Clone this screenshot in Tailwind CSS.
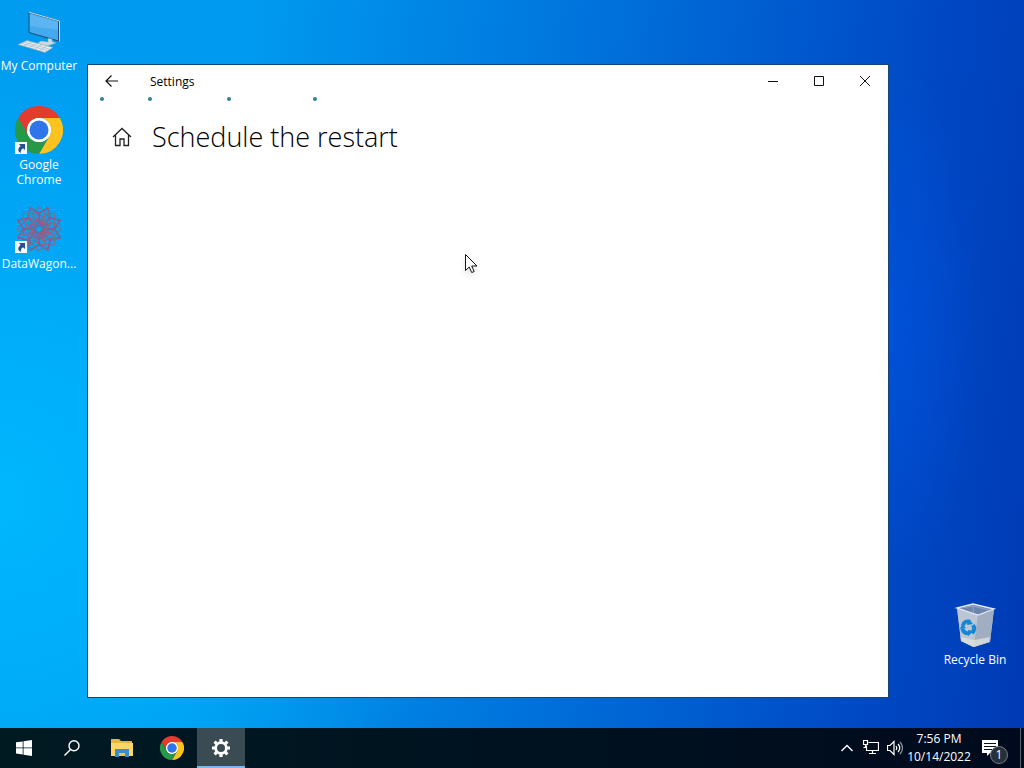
<!DOCTYPE html>
<html lang="en">
<head>
  <meta charset="UTF-8">
  <meta name="viewport" content="width=device-width, initial-scale=1.0">
  <title>Settings</title>
  <script src="https://cdn.jsdelivr.net/npm/@tailwindcss/browser@4"></script>
  <style>
    body {
      font-family: "Open Sans", "Noto Sans", sans-serif;
    }

    /* Wallpaper */
    .wallpaper {
      background:
        radial-gradient(ellipse 9% 34% at 87% 42%, rgba(0, 84, 224, 0.7), transparent),
        radial-gradient(ellipse 45% 60% at 0% 65%, rgba(0, 186, 255, 0.9), transparent),
        linear-gradient(96deg, #009cf0 0%, #009bf0 22%, #0078de 50%, #0057cd 74%, #0046c2 87%, #003ab4 100%);
    }
  </style>
</head>
<body class="wallpaper flex flex-col min-h-screen text-xs text-white overflow-hidden">
  <!-- Shared icons -->
  <svg class="hidden">
    <symbol id="chrome" viewBox="0 0 48 48">
      <circle cx="24" cy="24" r="12" fill="#fff"/>
      <path d="M24 12h20.8A24 24 0 0 0 3.2 12l10.4 18A12 12 0 0 1 24 12z" fill="#e33b2e"/>
      <path d="M34.4 30 24 48a24 24 0 0 0 20.8-36H24a12 12 0 0 1 10.4 18z" fill="#fcc31e"/>
      <path d="M13.6 30 3.2 12A24 24 0 0 0 24 48l10.4-18a12 12 0 0 1-20.8 0z" fill="#279847"/>
      <circle cx="24" cy="24" r="12" fill="#fff"/>
      <circle cx="24" cy="24" r="9.5" fill="#2f74e8"/>
    </symbol>
    <symbol id="shortcut" viewBox="0 0 12 12">
      <path d="M0 0h12v12H0z" fill="#f4f7fb"/>
      <path d="M4 2h6v6L8 6.300C6 7.500 5.500 9 6 11 2.500 9.500 2.500 6.500 5.600 4z" fill="#24508f"/>
    </symbol>
  </svg>

  <!-- Desktop -->
  <main class="relative flex flex-1 justify-between">
    <nav class="grid auto-rows-[99px] content-start w-[78px] pt-[7px] text-center leading-[15px]">
      <a href="#computer" class="flex flex-col items-center gap-[3px]">
        <svg class="size-12" viewBox="0 0 48 48">
          <path d="M15 5 45 13.500V35L15 26z" fill="#2878ae"/>
          <path d="M14 5.500 43.500 14v20L14 25.500z" fill="#45a9ee" stroke="#174d76"/>
          <path d="M15 7 43 15v8L15 19z" fill="#72c1f5" opacity=".5"/>
          <path d="M14 5.200 44.500 14v20.500" fill="none" stroke="#c9d9e0"/>
          <path d="M33 31.500v3.500l-7-1-4 2.500 9 3 10-3.500-4-1.500V32z" fill="#cbd9e1" stroke="#8aa7b8" stroke-width=".5"/>
          <path d="M12 33.500 38 40.500 30 45.500 3 37.500z" fill="#e7edf0" stroke="#8aa5b5" stroke-width=".7"/>
          <path d="m9 35 25 7M6 36.200l26 7.300M17 35l-8 4M22 36.300l-8 4.500M27 37.600l-8 5M32 39l-8 5" stroke="#9eb3be" stroke-width=".6"/>
        </svg>
        My Computer
      </a>
      <a href="#chrome-app" class="flex flex-col items-center gap-[3px]">
        <span class="relative">
          <svg class="size-12"><use href="#chrome"/></svg>
          <svg class="absolute bottom-0 left-0 size-3"><use href="#shortcut"/></svg>
        </span>
        <span>Google<br>Chrome</span>
      </a>
      <a href="#datawagon" class="flex flex-col items-center gap-[3px]">
        <span class="relative">
          <svg class="size-12" viewBox="-24 -24 48 48" fill="none" stroke="#7c6294" stroke-width="1.300">
            <g id="rosette"></g>
          </svg>
          <svg class="absolute bottom-0 left-0 size-3"><use href="#shortcut"/></svg>
        </span>
        DataWagon...
      </a>
    </nav>

    <a href="#recycle" class="flex flex-col items-center self-end gap-[3px] w-[98px] pb-[61px] leading-[15px]">
      <svg class="size-12" viewBox="0 0 48 48">
        <path d="M6 7 22 3l21 5-4 33-17 5-12-6z" fill="#aab7c9"/>
        <path d="M6 7 27 14l-4 32-13-6z" fill="#bcc5d4"/>
        <path d="m27 14 16-6-4 33-16 5z" fill="#a1aec2"/>
        <path d="m10 36 13 3 16-3-1 5-15 5-13-6z" fill="#dededc" opacity=".8"/>
        <path d="M6 7 22 3l21 5-16 6z" fill="#6d84ac" stroke="#e0e9f3" stroke-width="1.300"/>
        <path d="m22 4 .5 8M10 7l12-2 16 4" stroke="#93a6c4" fill="none"/>
        <g fill="none" stroke="#1287d6" stroke-width="4">
          <path d="M12 24.500c1-4 4-5 7-3"/>
          <path d="M22 24c2 3 1 6-1 8"/>
          <path d="M18 32.500c-4 0-6-2-6.500-5"/>
        </g>
        <path d="m18 18 4 5-6 1zM23 30l-6 5v-6zM9 28l2-5 4 4z" fill="#1287d6"/>
      </svg>
      Recycle Bin
    </a>

    <!-- Settings window -->
    <section class="absolute top-16 bottom-[30px] left-[87px] right-[135px] bg-white border border-[#14466f] text-black">
      <header class="flex items-center h-8">
        <button class="flex items-center justify-center w-12 h-8" aria-label="Back">
          <svg class="size-4" viewBox="0 0 16 16" fill="none" stroke="#111" stroke-width="1.200"><path d="M14 8H2.500M7.500 2.500 2 8l5.500 5.500"/></svg>
        </button>
        <h1 class="flex-1 pt-0.5 pl-3.5">Settings</h1>
        <button class="flex items-center justify-center w-[46px] h-8" aria-label="Minimize">
          <svg class="size-3" viewBox="0 0 12 12" stroke="#111"><path d="M1 6.500h10"/></svg>
        </button>
        <button class="flex items-center justify-center w-[46px] h-8" aria-label="Maximize">
          <svg class="size-3" viewBox="0 0 12 12" fill="none" stroke="#111"><path d="M1.500 1.500h9v9h-9z"/></svg>
        </button>
        <button class="flex items-center justify-center w-[46px] h-8" aria-label="Close">
          <svg class="size-3" viewBox="0 0 12 12" stroke="#111"><path d="m1 1 10 10M11 1 1 11"/></svg>
        </button>
      </header>

      <!-- Progress dots -->
      <svg class="w-full h-1" fill="#338197" role="progressbar" aria-label="Loading">
        <circle cx="14" cy="2" r="2"/>
        <circle cx="62" cy="2" r="2"/>
        <circle cx="141" cy="2" r="2"/>
        <circle cx="227" cy="2" r="2"/>
      </svg>

      <div class="flex items-center gap-5 px-6 pt-[18px]">
        <a href="#home" aria-label="Home">
          <svg class="size-5" viewBox="0 0 20 20" fill="none" stroke="#222" stroke-width="1.300"><path d="m1 10 9-8.500 9 8.500M3.500 8v10.500h4.500V12h4v6.500h4.500V8"/></svg>
        </a>
        <h2 class="text-[27px] leading-9 font-light">Schedule the restart</h2>
      </div>
    </section>

    <!-- Pointer -->
    <svg class="absolute top-[254px] left-[465px] w-4 h-6 drop-shadow-md" viewBox="0 0 16 24">
      <path d="M.5.500v16l3.700-3.500 2.500 5.500 2.500-1-2.500-5.500h5.300z" fill="#fff" stroke="#111"/>
    </svg>
  </main>

  <!-- Taskbar -->
  <footer class="flex items-stretch h-10 bg-linear-to-r from-[#001a22] to-[#000a1d]">
    <button class="flex items-center justify-center w-12" aria-label="Start">
      <svg class="size-4" viewBox="0 0 16 16" fill="#fff"><path d="M0 2.300 6.700 1.400v6.100H0zM7.500 1.300 16 0v7.500H7.500zM0 8.300h6.700v6.200L0 13.600zM7.500 8.300H16V16l-8.500-1.200z"/></svg>
    </button>
    <button class="flex items-center justify-center w-12" aria-label="Search">
      <svg class="size-4" viewBox="0 0 16 16" fill="none" stroke="#fff" stroke-width="1.400"><circle cx="10" cy="5.800" r="5"/><path d="M6.500 9.500.500 15.500"/></svg>
    </button>
    <button class="flex items-center justify-center w-[52px]" aria-label="File Explorer">
      <svg class="size-[22px]" viewBox="0 0 22 22">
        <path d="M0 2h8l2 2h11v15H0z" fill="#e9b33d"/>
        <path d="M0 6h22v13H0z" fill="#fcd768"/>
        <path d="M4 12h14v8h-4v-4H8v4H4z" fill="#3c8ec4"/>
        <path d="M8 16h6v3H8z" fill="#f2c34e"/>
      </svg>
    </button>
    <button class="flex items-center justify-center w-12" aria-label="Google Chrome">
      <svg class="size-6"><use href="#chrome"/></svg>
    </button>
    <button class="flex items-center justify-center w-12 ml-px bg-[#3a4b54] border-b-2 border-[#76b9ed]" aria-label="Settings">
      <svg class="size-5 mt-0.5" viewBox="-10 -10 20 20" fill="none" stroke="#fff">
        <circle r="5.400" stroke-width="2.800"/>
        <path d="M0-9v3M0 9v-3M-9 0h3M9 0h-3M-6.400-6.400l2 2M6.400 6.400l-2-2M-6.400 6.400l2-2M6.400-6.400l-2 2" stroke-width="3.200"/>
      </svg>
    </button>

    <div class="flex items-center ml-auto">
      <button class="flex items-center justify-center w-6" aria-label="Show hidden icons">
        <svg class="w-3 h-2" viewBox="0 0 12 8" fill="none" stroke="#fff" stroke-width="1.400"><path d="m.5 7 5.500-5.500L11.500 7"/></svg>
      </button>
      <button class="flex items-center justify-center w-6" aria-label="Network">
        <svg class="size-4" viewBox="0 0 16 16" fill="none" stroke="#fff" stroke-width="1.200"><path d="M5.500 2.500h10v8H3.500V5.500M.5.500h4v4h-4zM2.500 4.500v3M9.500 10.500v3M6 13.500h7M.5 7.500h3"/></svg>
      </button>
      <button class="flex items-center justify-center w-6" aria-label="Volume">
        <svg class="size-4" viewBox="0 0 16 16" fill="none" stroke="#fff" stroke-width="1.200"><path d="M.5 5.500H3l4-4v13l-4-4H.5zM9 6q1.500 2 0 4M11 4q3.500 4 0 8"/><path d="M13 2q5 6 0 12" stroke="#8b95a0"/></svg>
      </button>
      <time class="w-16 text-center leading-[18px]" datetime="2022-10-14T19:56">7:56 PM<br>10/14/2022</time>
      <button class="relative flex items-center justify-center w-[49px] h-10" aria-label="Notifications">
        <svg class="size-4 mr-3" viewBox="0 0 16 16"><path d="M0 0h16v13H8l-3 3v-3H0z" fill="#fff"/><path d="M2 3.500h12M2 6.500h12M2 9.500h8" stroke="#07131f"/></svg>
        <span class="absolute right-3 bottom-1 flex items-center justify-center size-[18px] rounded-full border border-[#747b83] bg-[#26303a]">1</span>
      </button>
      <button class="w-1 h-10 border-l border-[#59636e]" aria-label="Show desktop"></button>
    </div>
  </footer>

  <script>
    // Rosette of crossed squares around a star
    const rosette = document.getElementById('rosette');
    let shapes = '';
    for (let angle = 0; angle < 360; angle += 45) {
      shapes += `<g transform="rotate(${angle})">
        <path d="M-9-21 0-16 9-21 11-10 0-3-11-10z"/>
        <path d="M-7-15 0-22 7-15 0-8z" stroke="#677899"/>
        <path d="M-4-10 0-5 4-10M-5-16 5-12" stroke="#a9557d"/>
      </g>`;
    }
    rosette.innerHTML = shapes;
  </script>
</body>
</html>
